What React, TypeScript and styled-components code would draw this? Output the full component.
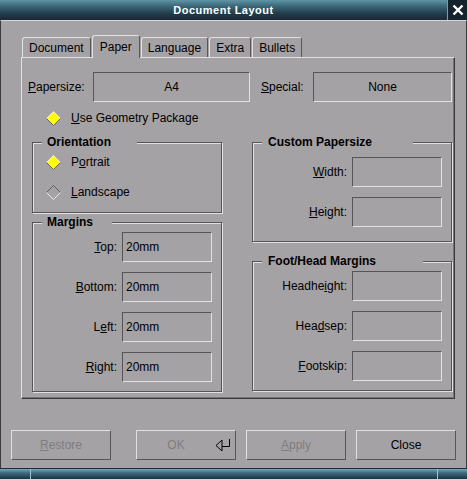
import React from "react";
import styled, { createGlobalStyle } from "styled-components";

const BG = "#a5a2a5";
const LIGHT = "#e2e0e2";
const DARK = "#575557";
const DISABLED = "#7f7d7f";

const GlobalStyle = createGlobalStyle`
  html, body { margin: 0; padding: 0; background: ${BG}; }
  body {
    font-family: "Liberation Sans", Arial, Helvetica, sans-serif;
    font-size: 12px;
    color: #000;
  }
`;

const Window = styled.div`
  width: 467px;
  height: 479px;
  display: flex;
  flex-direction: column;
  background: ${BG};
  overflow: hidden;
`;

const TitleBar = styled.div`
  height: 20px;
  flex: none;
  display: flex;
  background: linear-gradient(#5f95a6 0%, #3b6879 30%, #203a48 70%, #172a35 100%);
`;

const Title = styled.div`
  flex: 1;
  display: flex;
  align-items: center;
  justify-content: center;
  color: #fff;
  font-weight: bold;
  font-size: 11px;
  letter-spacing: 0.5px;
`;

const CloseBox = styled.div`
  width: 19px;
  border-left: 1px solid #7d9aa6;
  background: #15232c;
  display: flex;
  align-items: center;
  justify-content: center;
`;

const Frame = styled.div`
  flex: 1;
  display: flex;
  flex-direction: column;
  border-left: 1px solid #3c3a3c;
  border-right: 1px solid #3c3a3c;
  border-top: 1px solid #d6d4d6;
  padding: 14px 10px 0;
`;

const TabWidget = styled.div`
  margin-left: 10px;
  width: 434px;
`;

const TabBar = styled.div`
  height: 22px;
  display: flex;
  align-items: flex-end;
  gap: 1px;
  padding-left: 1px;
`;

const Tab = styled.div<{ $active?: boolean }>`
  box-sizing: border-box;
  height: ${(p) => (p.$active ? 23 : 20)}px;
  margin-bottom: ${(p) => (p.$active ? -1 : 0)}px;
  padding: 0 ${(p) => (p.$active ? 7 : 6)}px ${(p) => (p.$active ? 1 : 0)}px;
  display: flex;
  align-items: center;
  background: ${BG};
  border-top: 1px solid ${LIGHT};
  border-left: 1px solid ${LIGHT};
  border-right: 1px solid ${DARK};
  border-radius: 3px 3px 0 0;
  position: relative;
  z-index: ${(p) => (p.$active ? 1 : 0)};
`;

const Pane = styled.div`
  height: 342px;
  box-sizing: border-box;
  border-top: 1px solid ${LIGHT};
  border-left: 1px solid ${LIGHT};
  border-right: 1px solid #3a383a;
  border-bottom: 1px solid #3a383a;
  box-shadow: inset -1px -1px 0 #767476;
  padding: 14px 2px 0 6px;
`;

const TopRow = styled.div`
  display: flex;
  align-items: center;
  height: 30px;
`;

const RowLabel = styled.div<{ $w: number; $ml?: number }>`
  width: ${(p) => p.$w}px;
  margin-left: ${(p) => p.$ml ?? 0}px;
`;

const Mn = styled.span`
  text-decoration: underline;
`;

const Sunken = styled.div<{ $w: number; $center?: boolean }>`
  width: ${(p) => p.$w}px;
  height: 30px;
  box-sizing: border-box;
  border-top: 1px solid ${DARK};
  border-left: 1px solid ${DARK};
  border-bottom: 1px solid ${LIGHT};
  border-right: 1px solid ${LIGHT};
  display: flex;
  align-items: center;
  justify-content: ${(p) => (p.$center ? "center" : "flex-start")};
  padding-left: ${(p) => (p.$center ? 0 : 3)}px;
  flex: none;
`;

const OptionRow = styled.div<{ $ml?: number }>`
  display: flex;
  align-items: center;
  height: 20px;
  gap: 10px;
  margin-left: ${(p) => p.$ml ?? 0}px;
`;

const GeometryRow = styled(OptionRow)`
  margin-top: 6px;
`;

const Columns = styled.div`
  display: flex;
  gap: 30px;
  margin: 7px 0 0 4px;
`;

const Column = styled.div<{ $w: number; $gap: number }>`
  width: ${(p) => p.$w}px;
  display: flex;
  flex-direction: column;
  gap: ${(p) => p.$gap}px;
`;

const Group = styled.fieldset<{ $pad: string }>`
  margin: 0;
  min-inline-size: 0;
  box-sizing: border-box;
  border: 1px solid ${DARK};
  box-shadow: inset 1px 1px 0 ${LIGHT}, 1px 1px 0 ${LIGHT};
  padding: ${(p) => p.$pad};
  display: flex;
  flex-direction: column;
  gap: 10px;
`;

const Legend = styled.legend<{ $w: number; $ml: number; $pl: number }>`
  box-sizing: border-box;
  width: ${(p) => p.$w}px;
  margin-left: ${(p) => p.$ml}px;
  padding: 0 0 0 ${(p) => p.$pl}px;
  height: 14px;
  line-height: 14px;
  font-weight: bold;
  background: ${BG};
`;

const FieldRow = styled.div`
  display: flex;
  align-items: center;
  height: 30px;
  gap: 5px;
`;

const FieldLabel = styled.div`
  flex: 1;
  text-align: right;
  white-space: nowrap;
`;

const ButtonRow = styled.div`
  display: flex;
  gap: 10px;
  margin-top: 31px;
`;

const Button = styled.div<{ $disabled?: boolean; $spaced?: boolean }>`
  width: 100px;
  height: 30px;
  box-sizing: border-box;
  border-top: 1px solid ${LIGHT};
  border-left: 1px solid ${LIGHT};
  border-bottom: 1px solid ${DARK};
  border-right: 1px solid ${DARK};
  display: flex;
  align-items: center;
  justify-content: center;
  color: ${(p) => (p.$disabled ? DISABLED : "#000")};
  margin-right: ${(p) => (p.$spaced ? 15 : 0)}px;
`;

const ButtonText = styled.span`
  flex: 1;
  text-align: center;
`;

const ReturnIcon = styled.svg`
  margin-right: 5px;
  flex: none;
`;

const BottomEdge = styled.div`
  height: 11px;
  box-sizing: border-box;
  flex: none;
  display: flex;
  border-top: 1px solid #1e2c34;
  background: linear-gradient(#74a8bb 0%, #3d6a7b 40%, #1b3340 100%);
`;

const EdgeSeg = styled.div<{ $w?: number }>`
  width: ${(p) => (p.$w ? `${p.$w}px` : "auto")};
  flex: ${(p) => (p.$w ? "none" : 1)};
  border-right: 1px solid #9cc3d1;
  &:last-child { border-right: none; }
`;

const Diamond: React.FC<{ checked?: boolean }> = ({ checked }) => (
  <svg width="15" height="15" viewBox="0 0 15 15" style={{ flex: "none" }}>
    <polygon points="7.5,0.5 14.5,7.5 7.5,14.5 0.5,7.5" fill={checked ? "#ffff00" : BG} />
    <path d="M0.5 7.5 L7.5 0.5 L14.5 7.5" fill="none" stroke={checked ? "#f4f4b8" : "#5e5c5e"} strokeWidth="1" />
    <path d="M0.5 7.5 L7.5 14.5 L14.5 7.5" fill="none" stroke={checked ? "#6d6a4a" : "#eceaec"} strokeWidth="1" />
  </svg>
);

type Field = { label: React.ReactNode; value?: string };

const Fields: React.FC<{ items: Field[] }> = ({ items }) => (
  <>
    {items.map((f, i) => (
      <FieldRow key={i}>
        <FieldLabel>{f.label}</FieldLabel>
        <Sunken $w={90}>{f.value}</Sunken>
      </FieldRow>
    ))}
  </>
);

const tabs = ["Document", "Paper", "Language", "Extra", "Bullets"];

export default function App() {
  return (
    <>
      <GlobalStyle />
      <Window>
        <TitleBar>
          <Title>Document Layout</Title>
          <CloseBox>
            <svg width="12" height="12" viewBox="0 0 12 12">
              <path d="M1.5 1.5 L10.5 10.5 M10.5 1.5 L1.5 10.5" stroke="#fff" strokeWidth="2.4" />
            </svg>
          </CloseBox>
        </TitleBar>

        <Frame>
          <TabWidget>
            <TabBar>
              {tabs.map((t) => (
                <Tab key={t} $active={t === "Paper"}>{t}</Tab>
              ))}
            </TabBar>
            <Pane>
              <TopRow>
                <RowLabel $w={65}><Mn>P</Mn>apersize:</RowLabel>
                <Sunken $w={157} $center>A4</Sunken>
                <RowLabel $w={52} $ml={11}><Mn>S</Mn>pecial:</RowLabel>
                <Sunken $w={139} $center>None</Sunken>
              </TopRow>

              <GeometryRow $ml={18}>
                <Diamond checked />
                <span><Mn>U</Mn>se Geometry Package</span>
              </GeometryRow>

              <Columns>
                <Column $w={190} $gap={2}>
                  <Group $pad="3px 9px 10px 13px">
                    <Legend $w={95} $ml={-4} $pl={5}>Orientation</Legend>
                    <OptionRow>
                      <Diamond checked />
                      <span>P<Mn>o</Mn>rtrait</span>
                    </OptionRow>
                    <OptionRow>
                      <Diamond />
                      <span><Mn>L</Mn>andscape</span>
                    </OptionRow>
                  </Group>
                  <Group $pad="3px 9px 9px 13px">
                    <Legend $w={70} $ml={-4} $pl={5}>Margins</Legend>
                    <Fields
                      items={[
                        { label: <><Mn>T</Mn>op:</>, value: "20mm" },
                        { label: <><Mn>B</Mn>ottom:</>, value: "20mm" },
                        { label: <>L<Mn>e</Mn>ft:</>, value: "20mm" },
                        { label: <><Mn>R</Mn>ight:</>, value: "20mm" },
                      ]}
                    />
                  </Group>
                </Column>

                <Column $w={200} $gap={12}>
                  <Group $pad="8px 9px 14px 10px">
                    <Legend $w={151} $ml={-1} $pl={6}>Custom Papersize</Legend>
                    <Fields
                      items={[
                        { label: <><Mn>W</Mn>idth:</> },
                        { label: <><Mn>H</Mn>eight:</> },
                      ]}
                    />
                  </Group>
                  <Group $pad="3px 9px 9px 10px">
                    <Legend $w={161} $ml={-1} $pl={6}>Foot/Head Margins</Legend>
                    <Fields
                      items={[
                        { label: <>Headhe<Mn>i</Mn>ght:</> },
                        { label: <>Hea<Mn>d</Mn>sep:</> },
                        { label: <><Mn>F</Mn>ootskip:</> },
                      ]}
                    />
                  </Group>
                </Column>
              </Columns>
            </Pane>
          </TabWidget>

          <ButtonRow>
            <Button $disabled $spaced><span><Mn>R</Mn>estore</span></Button>
            <Button $disabled>
              <ButtonText>OK</ButtonText>
              <ReturnIcon width="15" height="13" viewBox="0 0 15 13">
                <polygon points="1,6.5 7,1 7,12" fill="none" stroke="#000" strokeWidth="1" />
                <path d="M7 7.5 H14.5 M14.5 0 V7.5" stroke="#000" strokeWidth="1" fill="none" />
              </ReturnIcon>
            </Button>
            <Button $disabled><span><Mn>A</Mn>pply</span></Button>
            <Button>Close</Button>
          </ButtonRow>
        </Frame>

        <BottomEdge>
          <EdgeSeg $w={30} />
          <EdgeSeg $w={406} />
          <EdgeSeg />
        </BottomEdge>
      </Window>
    </>
  );
}
